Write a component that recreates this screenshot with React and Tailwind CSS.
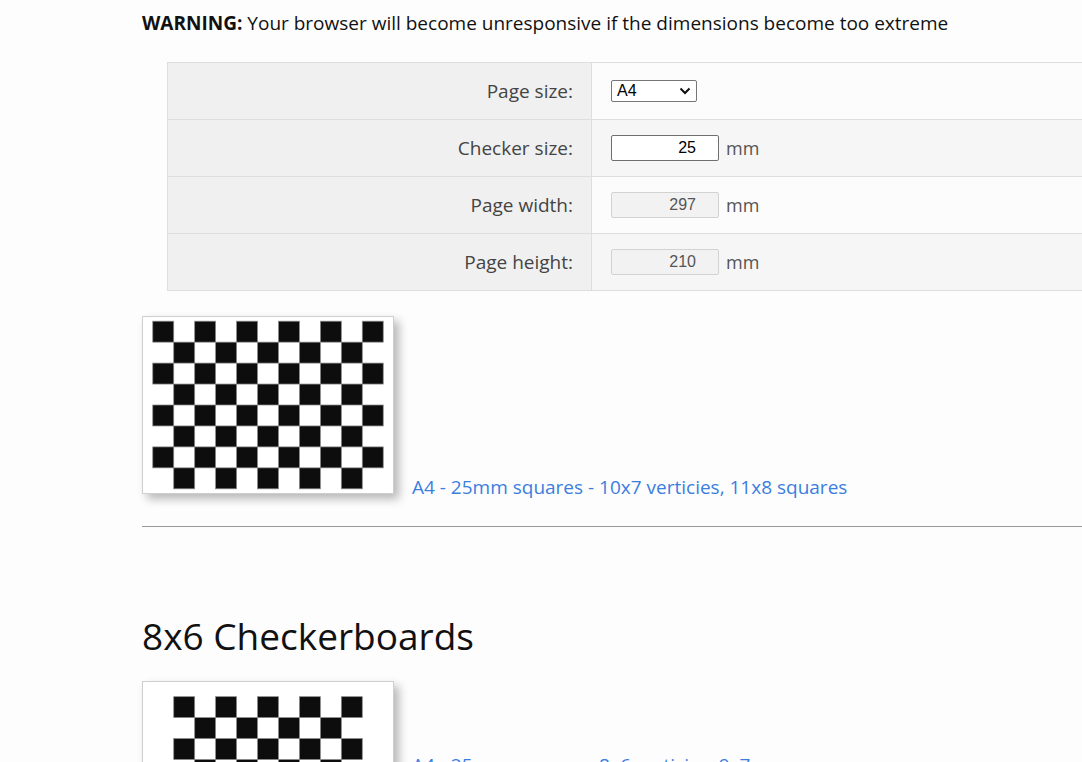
import React from "react";

// Checkerboard drawn on a page of pageW x pageH mm
const Checkerboard = ({ cols, rows, size = 25, pageW = 297, pageH = 210 }) => {
  const ox = (pageW - cols * size) / 2;
  const oy = (pageH - rows * size) / 2;
  const squares = [];
  for (let r = 0; r < rows; r++) {
    for (let c = 0; c < cols; c++) {
      if ((r + c) % 2 === 0) {
        squares.push(
          <rect
            key={`${r}-${c}`}
            x={ox + c * size}
            y={oy + r * size}
            width={size}
            height={size}
            fill="#0d0d0d"
            stroke="#8a8a8a"
            strokeWidth="0.9"
          />
        );
      }
    }
  }
  return (
    <div className="shrink-0 border border-[#cfcfcf] bg-white shadow-[5px_5px_9px_rgba(0,0,0,0.28)]">
      <svg width="250" height="176" viewBox={`0 0 ${pageW} ${pageH}`} className="block">
        <rect x="0" y="0" width={pageW} height={pageH} fill="#fff" />
        {squares}
      </svg>
    </div>
  );
};

const rows = [
  { label: "Page size:", kind: "select", bg: "bg-[#fcfcfc]" },
  { label: "Checker size:", kind: "input", value: "25", bg: "bg-[#f6f6f6]" },
  { label: "Page width:", kind: "disabled", value: "297", bg: "bg-[#fcfcfc]" },
  { label: "Page height:", kind: "disabled", value: "210", bg: "bg-[#f6f6f6]" },
];

const App = () => {
  return (
    <div className="h-[762px] w-full overflow-hidden bg-[#fdfdfd] font-['Open_Sans',sans-serif] text-[#111]">
      <div className="pl-[142px] pt-[8px]">
        {/* Warning */}
        <p className="text-[19px] leading-[30px]">
          <b className="font-bold">WARNING:</b> Your browser will become unresponsive if the dimensions become too extreme
        </p>

        {/* Settings table */}
        <table className="ml-[25px] mt-[24px] w-[1000px] border-collapse">
          <tbody>
            {rows.map((row) => (
              <tr key={row.label} className="h-[57px]">
                <td className="w-[424px] border border-[#dedede] bg-[#f0f0f0] pr-[18px] text-right text-[19px] text-[#444]">
                  {row.label}
                </td>
                <td className={`border border-[#dedede] pl-[19px] ${row.bg}`}>
                  {row.kind === "select" && (
                    <div className="flex h-[22px] w-[86px] items-center justify-between rounded-[2px] border border-[#767676] bg-white pl-[5px] pr-[5px] font-['Liberation_Sans',sans-serif] text-[16px] text-black">
                      <span>A4</span>
                      <svg width="12" height="8" viewBox="0 0 12 8">
                        <path d="M1.5 1.5 L6 6 L10.5 1.5" fill="none" stroke="#111" strokeWidth="2" />
                      </svg>
                    </div>
                  )}
                  {row.kind !== "select" && (
                    <div className="flex items-center gap-[7px]">
                      <div
                        className={
                          row.kind === "input"
                            ? "flex h-[26px] w-[108px] items-center justify-end rounded-[2px] border border-[#6f6f6f] bg-white pr-[22px] font-['Liberation_Sans',sans-serif] text-[16px] text-black"
                            : "flex h-[26px] w-[108px] items-center justify-end rounded-[2px] border border-[#d2d2d2] bg-[#f2f2f2] pr-[22px] font-['Liberation_Sans',sans-serif] text-[16px] text-[#555]"
                        }
                      >
                        {row.value}
                      </div>
                      <span className="text-[18px] text-[#555]">mm</span>
                    </div>
                  )}
                </td>
              </tr>
            ))}
          </tbody>
        </table>

        {/* A4 preview */}
        <div className="mt-[25px] flex items-baseline gap-[18px]">
          <Checkerboard cols={11} rows={8} />
          <a className="text-[19px] text-[#3c7ee0]">
            A4 - 25mm squares - 10x7 verticies, 11x8 squares
          </a>
        </div>

        <hr className="mt-[24px] border-t border-[#9a9a9a]" />

        <h2 className="mt-[87px] text-[37px] leading-[44px]">8x6 Checkerboards</h2>

        <div className="mt-[23px] flex items-center gap-[18px]">
          <Checkerboard cols={9} rows={7} />
          <a className="pb-[8px] text-[19px] text-[#3c7ee0]">
            A4 - 25mm squares - 8x6 verticies, 9x7 squares
          </a>
        </div>
      </div>
    </div>
  );
};

export default App;
